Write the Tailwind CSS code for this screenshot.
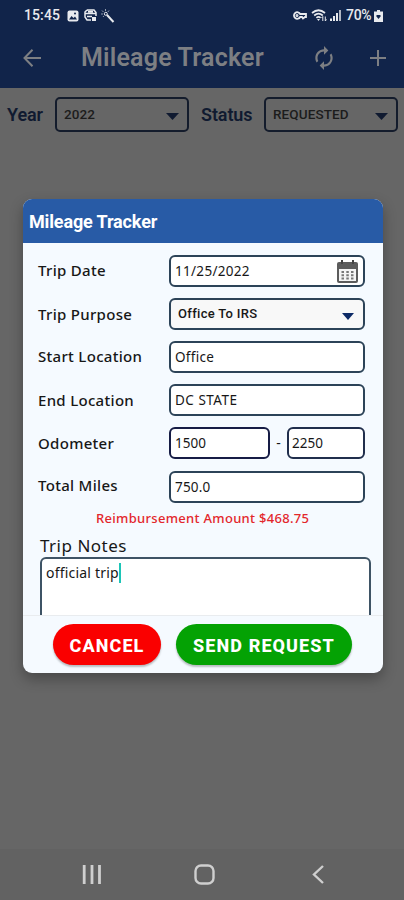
<!DOCTYPE html>
<html lang="en">
  <head>
    <meta charset="UTF-8" />
    <title>Mileage Tracker</title>
    <meta name="viewport" content="width=device-width, initial-scale=1.0" />
    <script src="https://cdn.jsdelivr.net/npm/@tailwindcss/browser@4"></script>
  </head>

  <body class="relative flex h-[900px] w-[404px] flex-col overflow-hidden bg-[#666666] font-['Roboto',sans-serif]">
    <!-- App bar -->
    <header class="h-[88px] shrink-0 bg-[#11244a]">
      <div class="flex h-[31px] items-center pl-6 pr-[21px] text-[#e8eaee]">
        <span class="w-[38px] whitespace-nowrap text-[14px] font-medium tracking-[0.1px]">15:45</span>
        <svg class="ml-[5px] size-3" viewBox="0 0 12 12">
          <rect x=".5" y=".5" width="11" height="11" rx="2" fill="currentColor" />
          <path d="M2 9.500 4.500 6l2 2L8 6.500l2 3z" fill="#11244a" />
          <circle cx="8" cy="3.500" r="1" fill="#11244a" />
        </svg>
        <svg class="ml-[5px] h-[13px] w-[13px]" viewBox="0 0 13 13" fill="none" stroke="currentColor" stroke-width="1.500">
          <path d="M3 1h7l2 2.500V7M3 1 1 3v5l2 3h4M1 4.500h11M3 7.500h5" />
          <path d="M4 2.800h5" stroke-width="2" />
          <rect x="8" y="8" width="4" height="4" fill="currentColor" stroke="none" />
        </svg>
        <svg class="ml-1 h-[14px] w-[14px]" viewBox="0 0 14 14" fill="none" stroke="currentColor">
          <path d="m6 6 6.500 7" stroke-width="2" />
          <path d="M4.500 0v2M1 1.500 2.500 3M0 5h2M8 1.500 6.800 3M2 8l1-1.200" opacity=".6" />
          <circle cx="4.800" cy="4.800" r="1.500" />
        </svg>

        <svg class="ml-auto h-[9px] w-[14px]" viewBox="0 0 14 9" fill="none" stroke="currentColor" stroke-width="1.800">
          <path d="M7.200 3A3.300 3.300 0 1 0 7.200 6H9l1 1.500L12 6h1V3z" />
          <circle cx="4" cy="4.500" r=".6" />
        </svg>
        <svg class="ml-[4px] h-[13px] w-[16px]" viewBox="0 0 16 13" fill="none" stroke="currentColor" stroke-width="1.700">
          <path d="M1 4Q7.500-1.500 14 4M3.200 6.500q4.300-3.600 8.600 0M5.400 8.800q2.100-1.800 4.200 0" />
          <path d="m6 10 1.500 2L9 10z" fill="currentColor" stroke="none" />
          <path d="M11.800 7.500V12m-1.300-3 1.300-1.500M14.300 7.500V12m1.200-1.500L14.300 12" stroke-width="1" />
        </svg>
        <svg class="ml-[3px] h-[11px] w-[11px]" viewBox="0 0 11 11" fill="currentColor">
          <path d="M0 8.500h2V11H0zM3 6h2v5H3zM6 3h2v8H6z" />
          <path d="M9 0h2v11H9z" opacity=".75" />
        </svg>
        <span class="ml-[5px] w-[27px] whitespace-nowrap text-[14px] font-medium tracking-[-0.3px]">70%</span>
        <svg class="ml-px h-3 w-[9px]" viewBox="0 0 9 12">
          <path d="M3 0h3v1.500h3V12H0V1.500h3z" fill="currentColor" />
          <path d="M2.500 5h4v1.500l-2 2.500-2-2.500z" fill="#11244a" />
        </svg>
      </div>
      <div class="flex h-[54px] items-center pl-[23px] pr-[18px] text-[#7d7f83]">
        <svg class="h-[18px] w-[18px]" viewBox="0 0 18 18" fill="none" stroke="currentColor" stroke-width="2">
          <path d="M9.500.8 1.500 9l8 8.200M1.500 9H18" />
        </svg>
        <h1 class="ml-[40px] w-[184px] whitespace-nowrap text-[25px] font-semibold tracking-[0.2px]">Mileage Tracker</h1>
        <svg class="ml-[46px] h-[26px] w-[26px]" viewBox="0 0 24 24" fill="currentColor">
          <path d="M12 6v3l4-4-4-4v3c-4.420 0-8 3.580-8 8 0 1.570.46 3.030 1.240 4.260L6.700 14.800c-.45-.83-.7-1.790-.7-2.800 0-3.310 2.690-6 6-6zm6.760 1.740L17.300 9.200c.44.84.7 1.790.7 2.800 0 3.310-2.690 6-6 6v-3l-4 4 4 4v-3c4.420 0 8-3.580 8-8 0-1.570-.46-3.030-1.240-4.260z" />
        </svg>
        <svg class="ml-auto size-4" viewBox="0 0 16 16" stroke="currentColor" stroke-width="2">
          <path d="M8 0v16M0 8h16" />
        </svg>
      </div>
    </header>

    <!-- Filters -->
    <div class="mt-[9px] flex h-[35px] shrink-0 items-center pl-[7px] pr-[6px] text-[#101a30]">
      <span class="w-[48px] text-[18px] font-semibold tracking-[-0.1px]">Year</span>
      <div class="flex h-[35px] w-[134px] items-center justify-between rounded-[5px] border-2 border-[#141c2c] pl-[7px] pr-[8px]">
        <span class="text-[13.500px] font-medium tracking-[0.1px] text-[#1c1c1c]">2022</span>
        <svg class="mt-1 h-[7px] w-[13px]" viewBox="0 0 13 7" fill="currentColor"><path d="M0 0h13L6.500 7z" /></svg>
      </div>
      <span class="ml-3 w-[63px] text-[18px] font-semibold tracking-[-0.1px]">Status</span>
      <div class="flex h-[35px] w-[134px] items-center justify-between rounded-[5px] border-2 border-[#141c2c] pl-[7px] pr-[8px]">
        <span class="text-[13.500px] font-medium tracking-[0.1px] text-[#1c1c1c]">REQUESTED</span>
        <svg class="mt-1 h-[7px] w-[13px]" viewBox="0 0 13 7" fill="currentColor"><path d="M0 0h13L6.500 7z" /></svg>
      </div>
    </div>

    <!-- Dialog -->
    <main class="ml-[23px] mt-[67px] flex h-[474px] w-[360px] shrink-0 flex-col overflow-hidden rounded-[9px] bg-[#f5faff] font-['Noto_Sans',sans-serif] text-[#171717] shadow-[0_6px_14px_rgba(0,0,0,0.3)]">
      <h2 class="flex h-[44px] shrink-0 items-center bg-[#285ba6] pl-[6px] pt-px font-['Roboto',sans-serif] text-[18px] font-bold tracking-[-0.14px] text-white">Mileage Tracker</h2>

      <div class="flex h-[373px] shrink-0 flex-col overflow-hidden border-b border-[#e9ecef] pl-[15px] pt-3">
        <div class="flex h-[43px] shrink-0 items-start">
          <label class="w-[131px] text-[15px]/[31px] font-medium tracking-[0.3px]">Trip Date</label>
          <div class="flex h-8 w-[196px] items-center justify-between rounded-[6px] border-2 border-[#2c4358] bg-white pl-1 pr-[5px] text-[13.500px]">
            <span class="tracking-[0.3px]">11/25/2022</span>
            <svg class="h-[23px] w-[21px]" viewBox="0 0 21 23">
              <path d="M2 2h17q2 0 2 2v17q0 2-2 2H2q-2 0-2-2V4q0-2 2-2z" fill="#5c5c5c" />
              <path d="M2 9h17v12H2z" fill="#f4f4f4" />
              <path d="M4 0h2v4H4zM15 0h2v4h-2z" fill="#444" />
              <path d="M4.500 11h2.500v2H4.500zM9.300 11h2.500v2H9.300zM14 11h2.500v2H14zM4.500 14.200h2.500v2H4.500zM9.300 14.200h2.500v2H9.300zM14 14.200h2.500v2H14zM4.500 17.400h2.500v2H4.500zM9.300 17.400h2.500v2H9.300zM14 17.400h2.500v2H14z" fill="#777" />
            </svg>
          </div>
        </div>
        <div class="flex h-[43px] shrink-0 items-start">
          <label class="w-[131px] text-[15px]/[32px] font-medium tracking-[0.3px]">Trip Purpose</label>
          <div class="flex h-8 w-[196px] items-center justify-between rounded-[6px] border-2 border-[#2c4358] bg-[#f8f8f8] pl-[7px] pr-[9px] font-['Roboto',sans-serif] text-[13px] font-medium">
            <span class="tracking-[0.3px]">Office To IRS</span>
            <svg class="mt-1 h-[7px] w-3" viewBox="0 0 12 7" fill="#0d2a66"><path d="M0 0h12L6 7z" /></svg>
          </div>
        </div>
        <div class="flex h-[43px] shrink-0 items-start">
          <label class="w-[131px] text-[15px]/[31px] font-medium tracking-[0.3px]">Start Location</label>
          <div class="flex h-8 w-[196px] items-center rounded-[6px] border-2 border-[#2c4358] bg-white pl-1 text-[13.500px] tracking-[0.3px]">Office</div>
        </div>
        <div class="flex h-[43px] shrink-0 items-start">
          <label class="w-[131px] text-[15px]/[32px] font-medium tracking-[0.3px]">End Location</label>
          <div class="flex h-8 w-[196px] items-center rounded-[6px] border-2 border-[#2c4358] bg-white pl-1 text-[13.500px] tracking-[0.5px]">DC STATE</div>
        </div>
        <div class="flex h-[44px] shrink-0 items-start">
          <label class="w-[131px] text-[15px]/[32px] font-medium tracking-[0.3px]">Odometer</label>
          <div class="flex h-8 w-[101px] items-center rounded-[6px] border-2 border-[#161c45] bg-white pl-1 text-[13.500px]">1500</div>
          <span class="w-[17px] text-center text-[14px]/[32px]">-</span>
          <div class="flex h-8 w-[78px] items-center rounded-[6px] border-2 border-[#202e4c] bg-white pl-[3px] text-[13.500px]">2250</div>
        </div>
        <div class="flex h-[32px] shrink-0 items-start">
          <label class="w-[131px] text-[15px]/[29px] font-medium tracking-[0.3px]">Total Miles</label>
          <div class="flex h-8 w-[196px] items-center rounded-[6px] border-2 border-[#2c4358] bg-white pl-1 text-[13.500px] tracking-[0.2px]">750.0</div>
        </div>
        <p class="h-8 shrink-0 pl-[58px] text-[13px]/[30px] font-medium tracking-[0.3px] text-[#e3262b]">Reimbursement Amount $468.75</p>
        <p class="h-[22px] shrink-0 pl-[2px] text-[17px]/[22px] tracking-[0.5px]">Trip Notes</p>
        <div class="ml-[2px] h-[80px] w-[331px] shrink-0 rounded-[6px] border-2 border-[#3e5365] bg-white pl-[4px] pt-[4px]">
          <div class="flex items-center text-[14px]/[20px]">
            <span class="tracking-[0.2px]">official trip</span>
            <span class="h-[20px] w-[2px] bg-[#1cc5b7]"></span>
          </div>
        </div>
      </div>

      <div class="flex gap-[15px] pl-[30px] pt-[8px] font-['Roboto',sans-serif] text-[18px] font-extrabold tracking-[1.100px] text-white">
        <button class="h-[41px] w-[108px] rounded-full bg-[#fa0000] pt-0.5 shadow-[0_2px_2px_rgba(0,0,0,0.25)]">CANCEL</button>
        <button class="h-[41px] w-[176px] rounded-full bg-[#04a204] pt-0.5 shadow-[0_2px_2px_rgba(0,0,0,0.25)]">SEND REQUEST</button>
      </div>
    </main>

    <!-- Navigation bar -->
    <nav class="mt-auto flex h-[51px] shrink-0 items-center bg-[#626262] pl-[82px] text-[#cfcfcf]">
      <svg class="h-[19px] w-5" viewBox="0 0 20 19" stroke="currentColor" stroke-width="2.800">
        <path d="M2.200 0v19M10 0v19M17.500 0v19" />
      </svg>
      <svg class="ml-[92px] h-[21px] w-[21px]" viewBox="0 0 21 21" fill="none" stroke="currentColor" stroke-width="2.400">
        <rect x="1.500" y="1.500" width="18" height="18" rx="5.500" />
      </svg>
      <svg class="ml-[97px] h-[19px] w-3" viewBox="0 0 12 19" fill="none" stroke="currentColor" stroke-width="2.400">
        <path d="M11 1 2 9.500 11 18" />
      </svg>
    </nav>
  </body>
</html>
